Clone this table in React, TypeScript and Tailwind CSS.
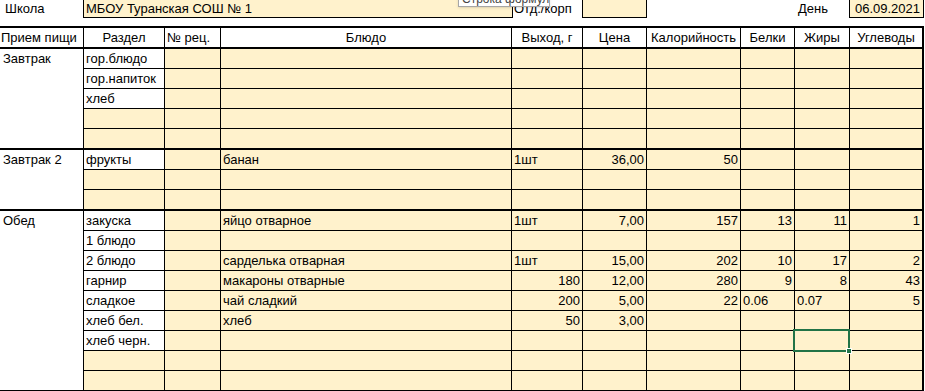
import React from 'react';

// widths of columns B..J (each includes its right border)
const COLS = 'grid-cols-[81px_56px_291px_71px_64px_94px_54px_55px_74px]';
const HEAD_COLS = 'grid-cols-[84px_81px_56px_291px_71px_64px_94px_54px_55px_74px]';

type Row = string[]; // B, C, D, E, F, G, H, I, J

interface Group {
  label: string;
  rows: Row[];
}

const blank = (): Row => ['', '', '', '', '', '', '', '', ''];

const groups: Group[] = [
  {
    label: 'Завтрак',
    rows: [
      ['гор.блюдо', '', '', '', '', '', '', '', ''],
      ['гор.напиток', '', '', '', '', '', '', '', ''],
      ['хлеб', '', '', '', '', '', '', '', ''],
      blank(),
      blank(),
    ],
  },
  {
    label: 'Завтрак 2',
    rows: [['фрукты', '', 'банан', '1шт', '36,00', '50', '', '', ''], blank(), blank()],
  },
  {
    label: 'Обед',
    rows: [
      ['закуска', '', 'яйцо отварное', '1шт', '7,00', '157', '13', '11', '1'],
      ['1 блюдо', '', '', '', '', '', '', '', ''],
      ['2 блюдо', '', 'сарделька отварная', '1шт', '15,00', '202', '10', '17', '2'],
      ['гарнир', '', 'макароны отварные', '180', '12,00', '280', '9', '8', '43'],
      ['сладкое', '', 'чай сладкий', '200', '5,00', '22', '0.06', '0.07', '5'],
      ['хлеб бел.', '', 'хлеб', '50', '3,00', '', '', '', ''],
      ['хлеб черн.', '', '', '', '', '', '', '', ''],
      blank(),
      blank(),
    ],
  },
];

const headers = ['Раздел', '№ рец.', 'Блюдо', 'Выход, г', 'Цена', 'Калорийность', 'Белки', 'Жиры', 'Углеводы'];

const isNumber = (v: string) => /^[\d,]+$/.test(v);

const DataCell: React.FC<{ value: string; col: number; selected?: boolean }> = ({ value, col, selected }) => {
  const white = col === 0 && value !== '';
  return (
    <div
      className={`relative whitespace-nowrap leading-[19px] ${
        col === 8 ? 'border-r-2' : 'border-r'
      } border-black ${white ? 'bg-white' : 'bg-[#fff2cc]'} ${
        isNumber(value) ? 'text-right pr-[2px]' : 'text-left pl-[2px]'
      }`}
    >
      {value}
      {selected && (
        <div className="absolute -left-[2px] -top-[2px] w-[57px] h-[23px] border-2 border-[#217346] z-10">
          <div className="absolute -right-[4px] -bottom-[4px] w-[6px] h-[6px] bg-[#217346] border border-white" />
        </div>
      )}
    </div>
  );
};

export default function App() {
  return (
    <div
      className="relative w-[925px] h-[391px] overflow-hidden bg-white text-[13px] text-black"
      style={{ fontFamily: '"Liberation Sans", Arial, sans-serif' }}
    >
      {/* Top info row */}
      <div className="flex h-[18px] leading-[17px]">
        <div className="w-[83px] pl-[5px]">Школа</div>
        <div className="w-[430px] border-l border-r border-b border-black bg-[#fff2cc] pl-[2px]">
          МБОУ Туранская СОШ № 1
        </div>
        <div className="w-[69px] pl-[1px] bg-white">Отд./корп</div>
        <div className="w-[65px] border-l border-r border-b border-black bg-[#fff2cc]" />
        <div className="w-[149px]" />
        <div className="w-[53px] pl-[2px]">День</div>
        <div className="w-[75px] border-l border-r border-b border-black bg-[#fff2cc] text-right pr-[3px]">
          06.09.2021
        </div>
      </div>

      {/* formula bar tooltip, partially visible */}
      <div className="absolute left-[458px] -top-[9px] w-[92px] h-[16px] overflow-hidden whitespace-nowrap border border-[#a6a6a6] bg-white text-[12px] leading-[14px] text-[#444] px-[3px] z-20 shadow-sm">
        Строка формул
      </div>

      <div className="h-[8px]" />

      {/* Table */}
      <div className="w-[924px]">
        <div className={`grid ${HEAD_COLS} h-[23px] border-y-2 border-black bg-white`}>
          <div className="border-r border-black pl-[1px] whitespace-nowrap leading-[19px]">Прием пищи</div>
          {headers.map((h, i) => (
            <div
              key={h}
              className={`${i === 8 ? 'border-r-2' : 'border-r'} border-black whitespace-nowrap leading-[19px] ${
                i === 1 ? 'text-left pl-[2px]' : 'text-center'
              }`}
            >
              {h}
            </div>
          ))}
        </div>

        {groups.map((g, gi) => (
          <div key={g.label} className="flex border-b-2 border-black">
            <div className="w-[84px] shrink-0 border-r border-black bg-white pl-[3px] leading-[19px]">{g.label}</div>
            <div className="flex flex-col">
              {g.rows.map((r, ri) => (
                <div
                  key={ri}
                  className={`grid ${COLS} ${ri < g.rows.length - 1 ? 'h-5 border-b border-black' : 'h-[19px]'}`}
                >
                  {r.map((v, ci) => (
                    <DataCell key={ci} value={v} col={ci} selected={gi === 2 && ri === 6 && ci === 7} />
                  ))}
                </div>
              ))}
            </div>
          </div>
        ))}
      </div>
    </div>
  );
}
